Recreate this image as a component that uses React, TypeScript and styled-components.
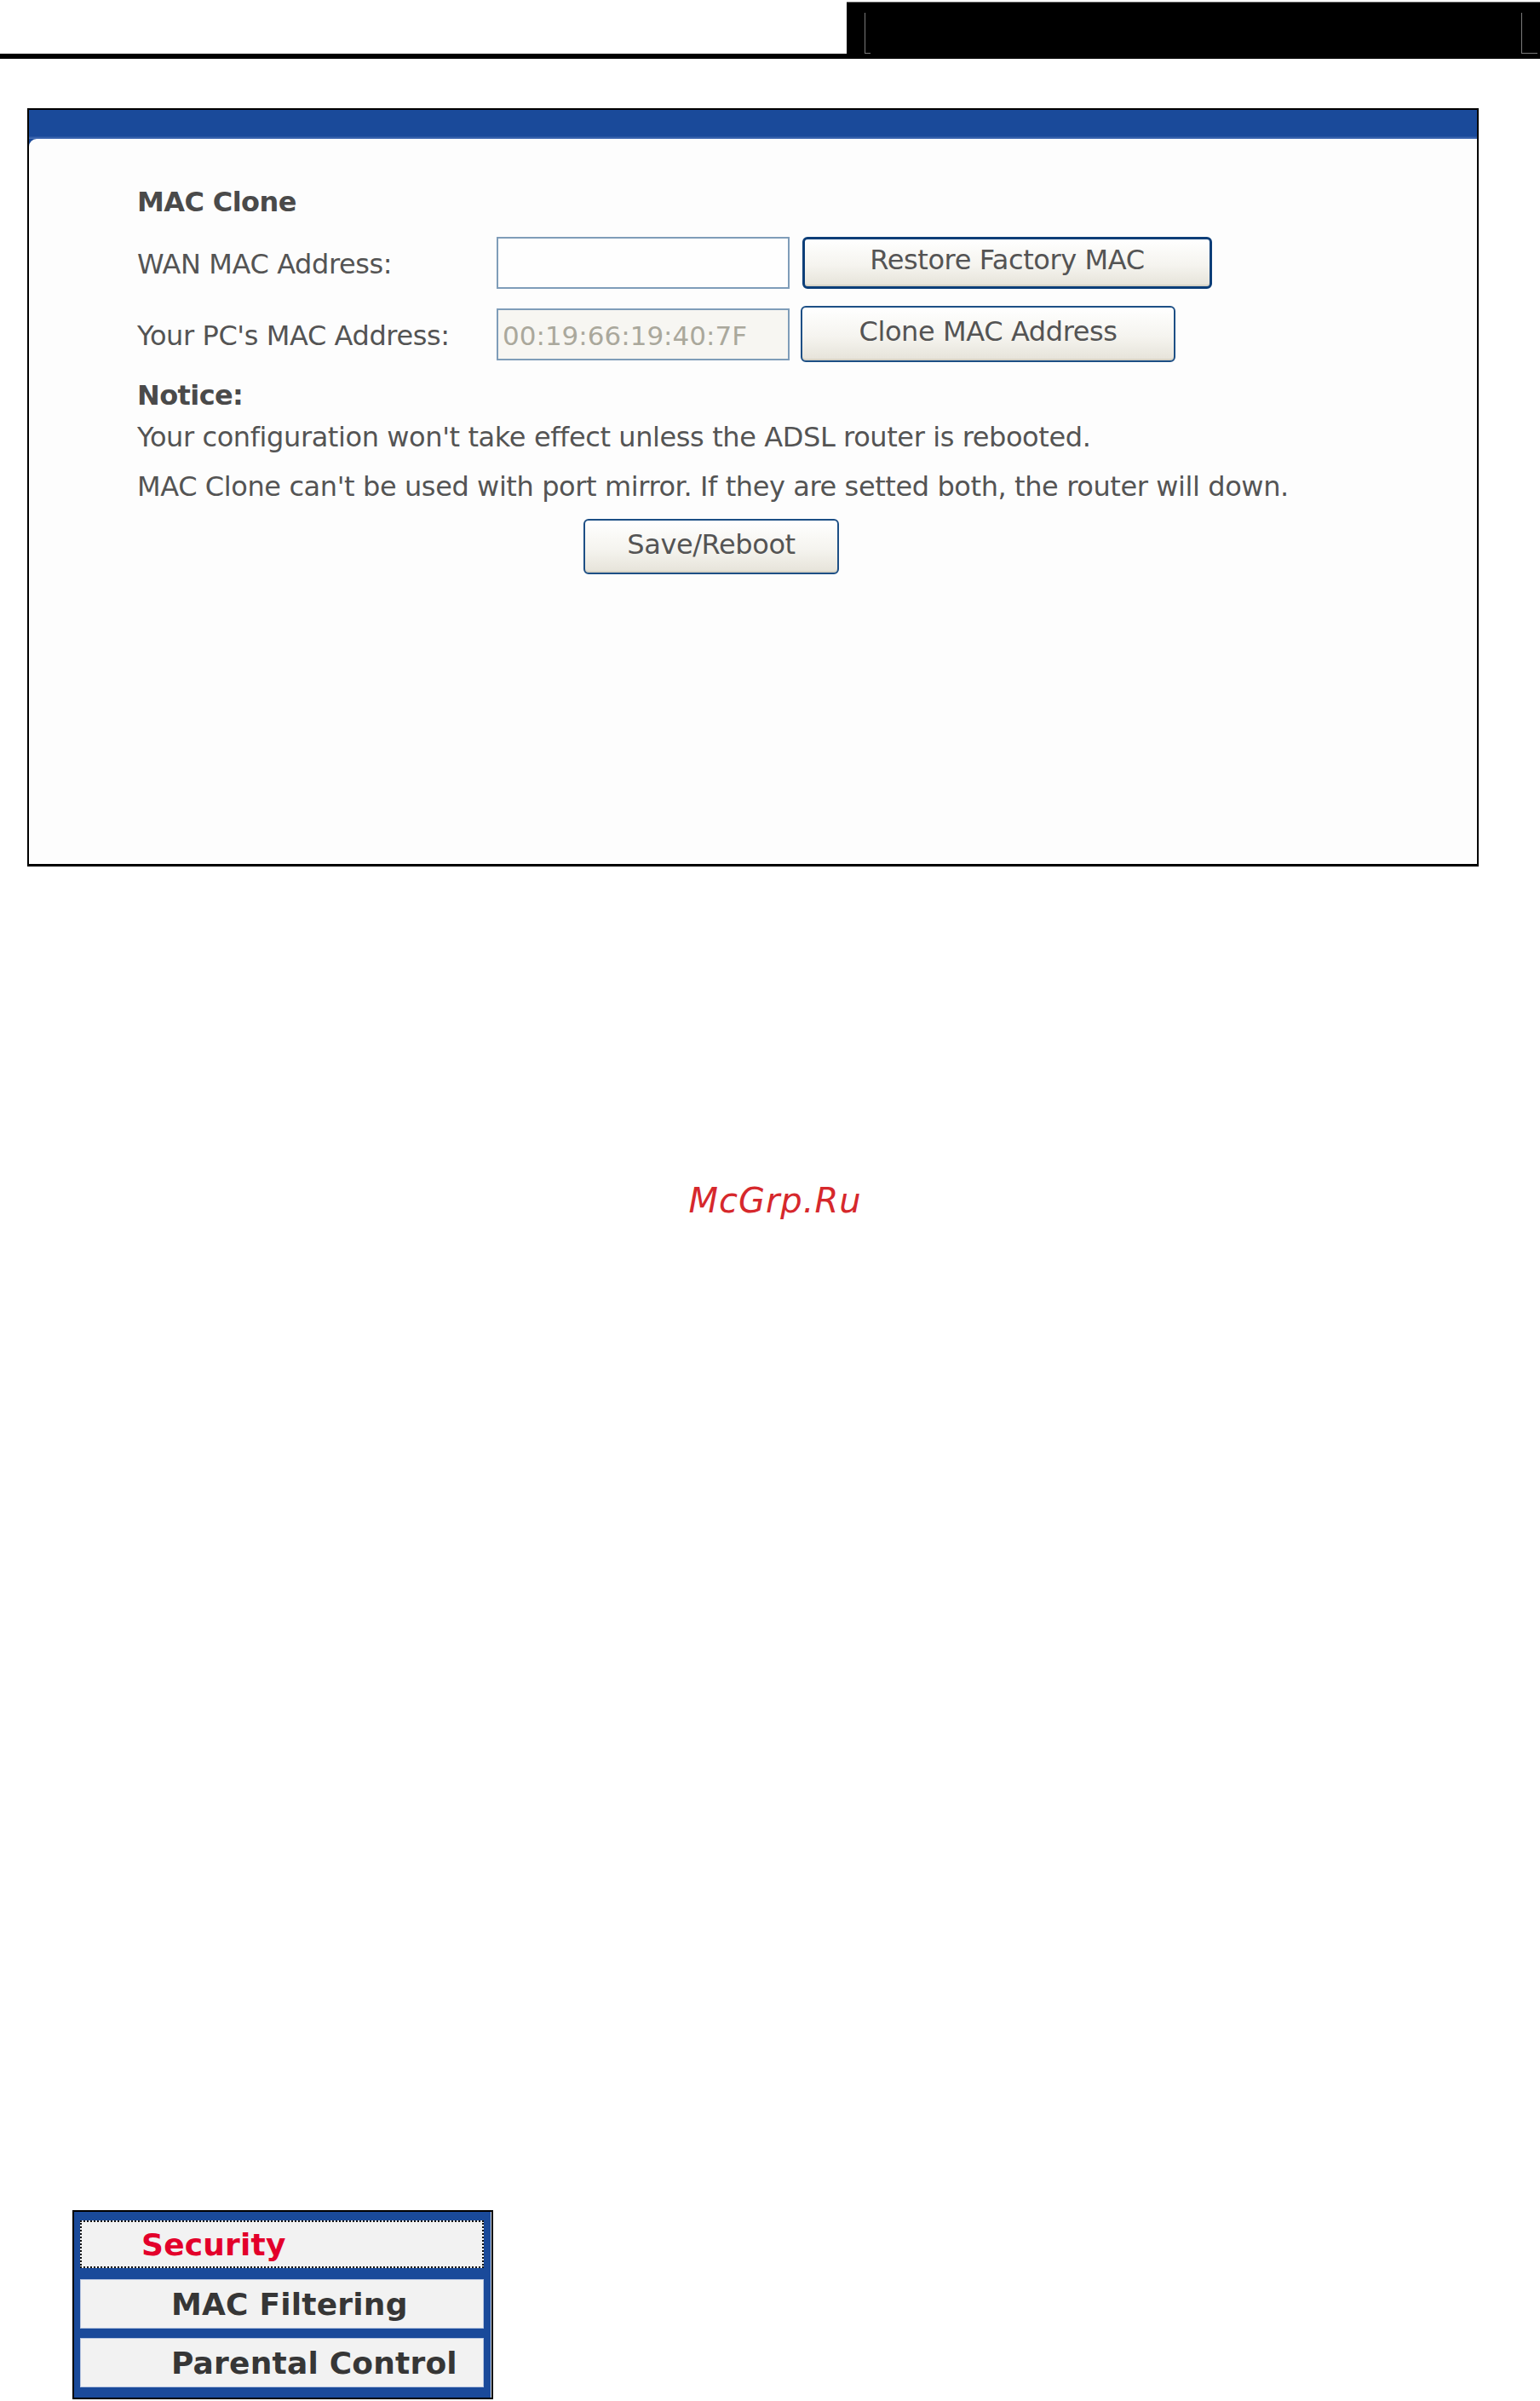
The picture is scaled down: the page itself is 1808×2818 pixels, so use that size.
import React from "react";
import styled, { createGlobalStyle } from "styled-components";

const GlobalStyle = createGlobalStyle`
  html, body {
    margin: 0;
    padding: 0;
    background: #ffffff;
  }
  body {
    width: 1808px;
    height: 2818px;
    overflow: hidden;
    font-family: "DejaVu Sans", Verdana, sans-serif;
  }
`;

const Page = styled.div`
  width: 1808px;
  display: flex;
  flex-direction: column;
`;

/* top header strip */
const HeaderBar = styled.div`
  display: flex;
  height: 63px;
  border-bottom: 6px solid #000;
`;

const HeaderBlank = styled.div`
  flex: 1;
`;

const HeaderBlack = styled.div`
  width: 814px;
  background: #000;
  border-top: 1px solid #6e6e6e;
  margin-top: 2px;
  padding: 12px 21px 0 21px;
  box-sizing: border-box;
  display: flex;
`;

const HeaderFrame = styled.div`
  position: relative;
  flex: 1;
  border-left: 1px solid #7a7a7a;
  border-right: 1px solid #7a7a7a;
  &::before,
  &::after {
    content: "";
    position: absolute;
    bottom: 0;
    height: 1px;
    background: #7a7a7a;
  }
  &::before {
    left: 0;
    width: 6px;
  }
  &::after {
    right: -19px;
    width: 18px;
  }
`;

/* main settings panel */
const Panel = styled.div`
  margin: 58px 0 0 32px;
  width: 1704px;
  box-sizing: border-box;
  border: 2px solid #000;
  border-bottom-width: 3px;
  background: #1a4a9a;
`;

const PanelHead = styled.div`
  height: 34px;
  background: linear-gradient(to bottom, #1a4a9a 0%, #1a4a9a 90%, #4d73b8 100%);
`;

const PanelBody = styled.div`
  background: #fdfdfd;
  border-top-left-radius: 9px;
  height: 851px;
  box-sizing: border-box;
  padding: 54px 0 0 127px;
  color: #545454;
  font-size: 32px;
  letter-spacing: -0.4px;
`;

const Heading = styled.div`
  font-weight: bold;
  line-height: 40px;
  color: #4a4a4a;
  letter-spacing: -0.6px;
`;

const FieldRow = styled.div`
  display: flex;
  align-items: center;
  height: 66px;
  margin-top: 18px;
`;

const Label = styled.div`
  width: 422px;
  line-height: 40px;
  padding-top: 4px;
`;

const TextBox = styled.div<{ $disabled?: boolean }>`
  width: 344px;
  height: 61px;
  box-sizing: border-box;
  border: 2px solid #7f9db9;
  background: ${(p) => (p.$disabled ? "#f7f6f2" : "#fefefe")};
  color: #aaa89c;
  padding: 10px 0 0 5px;
  font-size: 31px;
  letter-spacing: 0;
  line-height: 40px;
`;

const XpButton = styled.div<{ $w: number; $h: number; $focus?: boolean }>`
  width: ${(p) => p.$w}px;
  height: ${(p) => p.$h}px;
  box-sizing: border-box;
  border: ${(p) => (p.$focus ? "3px solid #0c3e78" : "2px solid #1d4f85")};
  border-radius: 6px;
  background: linear-gradient(to bottom, #ffffff 0%, #f5f4ef 55%, #e6e3d9 100%);
  display: flex;
  align-items: center;
  justify-content: center;
  color: #545454;
  line-height: 40px;
  padding-bottom: 6px;
  box-shadow: inset 0 -2px 0 #d7d3c6;
`;

const ButtonSlot = styled.div<{ $offset: number }>`
  margin-left: ${(p) => p.$offset}px;
`;

const Notice = styled.div`
  margin-top: 19px;
  font-weight: bold;
  line-height: 40px;
  color: #4a4a4a;
  letter-spacing: -0.6px;
`;

const NoticeLine = styled.div<{ $gap: number }>`
  margin-top: ${(p) => p.$gap}px;
  line-height: 40px;
`;

const SaveRow = styled.div`
  margin: 18px 0 0 524px;
`;

/* watermark */
const Watermark = styled.div`
  margin-top: 368px;
  text-align: center;
  font-family: "DejaVu Sans", sans-serif;
  font-style: oblique;
  font-size: 40px;
  line-height: 48px;
  color: #d6282c;
  letter-spacing: 1px;
  padding-left: 12px;
`;

/* bottom menu snippet */
const MenuBox = styled.div`
  margin: 1161px 0 0 85px;
  width: 494px;
  box-sizing: border-box;
  border: 2px solid #000;
  background: #1a4a9a;
  padding: 10px 9px 12px 7px;
  display: flex;
  flex-direction: column;
  box-shadow: inset -5px 0 0 -4px #dfe6f3;
`;

const MenuItem = styled.div<{ $active?: boolean; $h: number; $gap: number; $indent: number }>`
  height: ${(p) => p.$h}px;
  margin-top: ${(p) => p.$gap}px;
  box-sizing: border-box;
  background: #f2f2f2;
  border: ${(p) => (p.$active ? "2px dotted #111" : "1px solid #b8c6e0")};
  padding-left: ${(p) => p.$indent}px;
  display: flex;
  align-items: center;
  font-family: "DejaVu Sans", sans-serif;
  font-weight: bold;
  font-size: 36px;
  letter-spacing: 0.2px;
  color: ${(p) => (p.$active ? "#e3002b" : "#363636")};
`;

export default function App() {
  return (
    <Page>
      <GlobalStyle />
      <HeaderBar>
        <HeaderBlank />
        <HeaderBlack>
          <HeaderFrame />
        </HeaderBlack>
      </HeaderBar>

      <Panel>
        <PanelHead />
        <PanelBody>
          <Heading>MAC Clone</Heading>
          <FieldRow>
            <Label>WAN MAC Address:</Label>
            <TextBox />
            <ButtonSlot $offset={15}>
              <XpButton $w={481} $h={61} $focus>
                Restore Factory MAC
              </XpButton>
            </ButtonSlot>
          </FieldRow>
          <FieldRow>
            <Label>Your PC's MAC Address:</Label>
            <TextBox $disabled>00:19:66:19:40:7F</TextBox>
            <ButtonSlot $offset={13}>
              <XpButton $w={440} $h={66}>
                Clone MAC Address
              </XpButton>
            </ButtonSlot>
          </FieldRow>
          <Notice>Notice:</Notice>
          <NoticeLine $gap={9}>
            Your configuration won't take effect unless the ADSL router is rebooted.
          </NoticeLine>
          <NoticeLine $gap={18}>
            MAC Clone can't be used with port mirror. If they are setted both, the router will down.
          </NoticeLine>
          <SaveRow>
            <XpButton $w={300} $h={65}>
              Save/Reboot
            </XpButton>
          </SaveRow>
        </PanelBody>
      </Panel>

      <Watermark>McGrp.Ru</Watermark>

      <MenuBox>
        <MenuItem $active $h={56} $gap={0} $indent={70}>
          Security
        </MenuItem>
        <MenuItem $h={58} $gap={13} $indent={106}>
          MAC Filtering
        </MenuItem>
        <MenuItem $h={58} $gap={11} $indent={106}>
          Parental Control
        </MenuItem>
      </MenuBox>
    </Page>
  );
}
